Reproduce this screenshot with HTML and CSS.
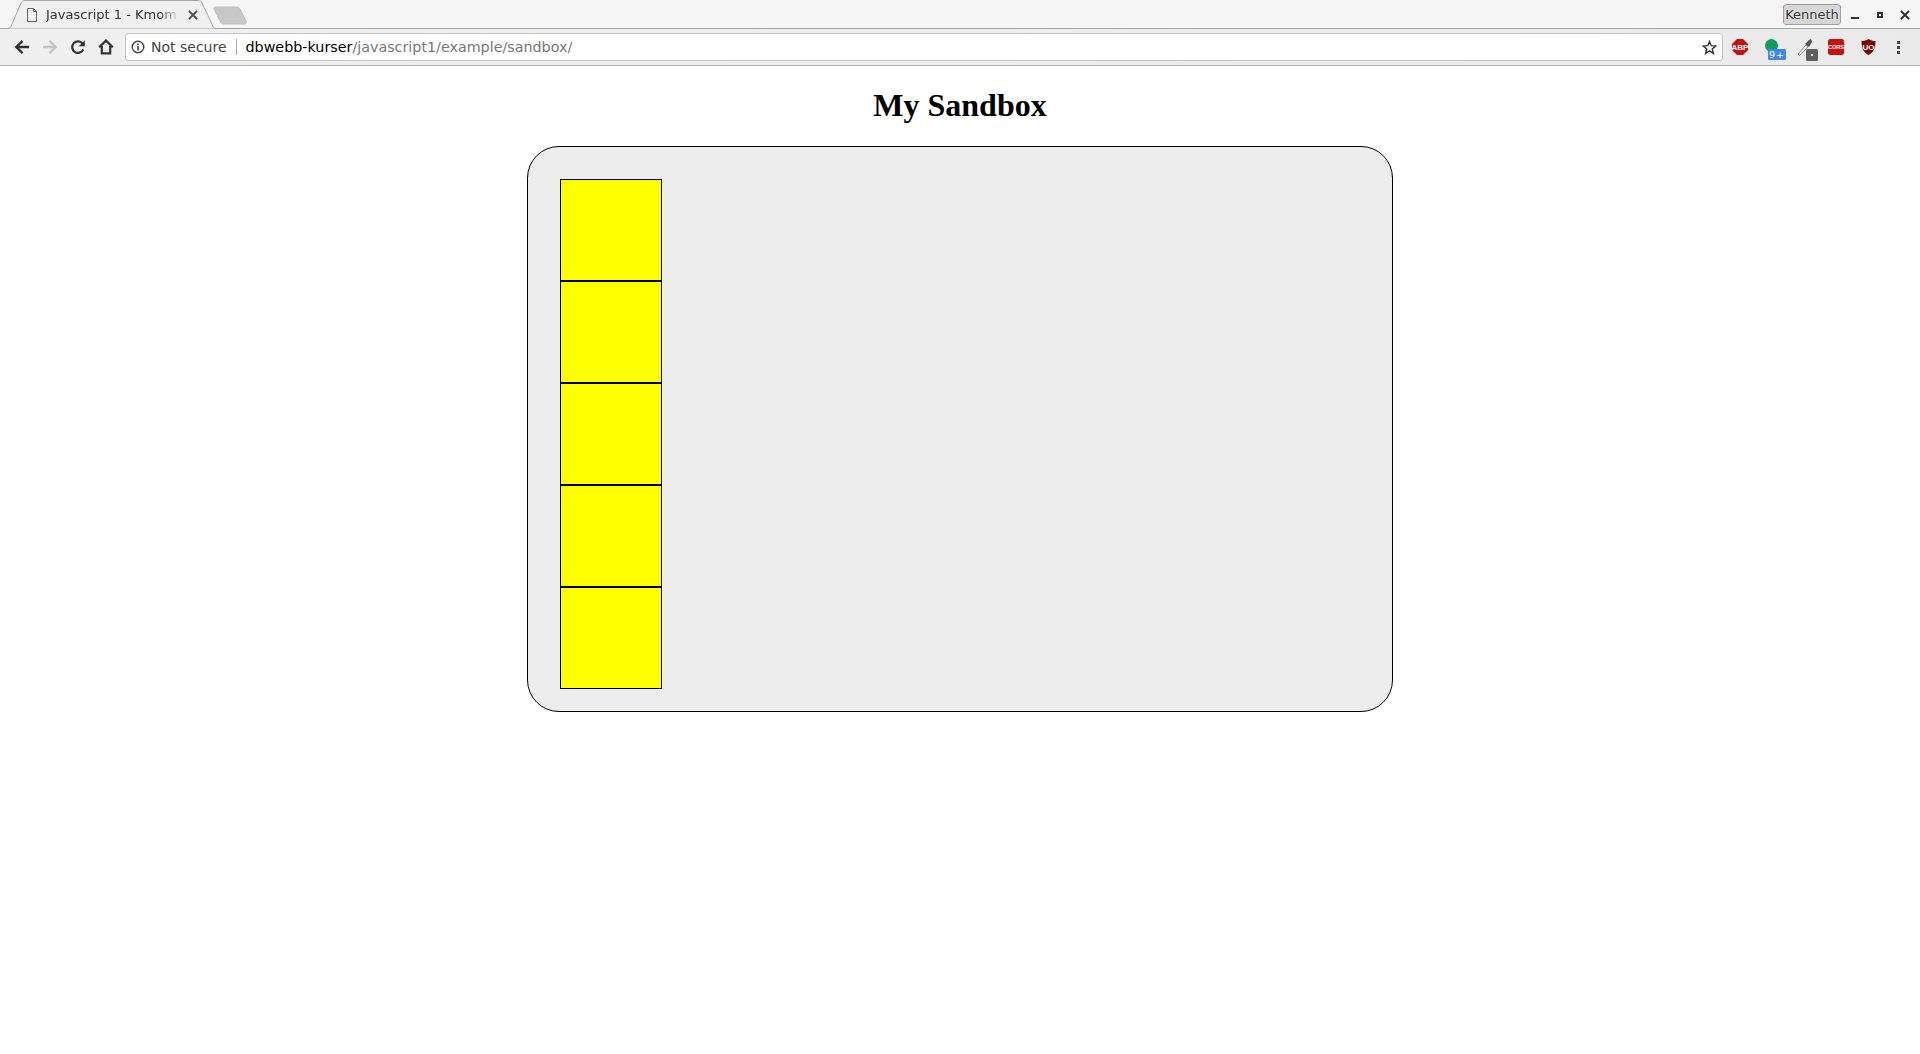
FILE: index.html
```html
<!DOCTYPE html>
<html lang="en">
<head>
    <meta charset="UTF-8">
    <meta name="viewport" content="width=device-width, initial-scale=1.0">
    <title>My Sandbox</title>
    <link rel="stylesheet" href="styles.css">
</head>
<body>
    <header class="browser">
        <div class="tabstrip">
            <div class="tab">
                <svg class="tab-shape" width="226" height="29" viewBox="0 0 226 29">
                    <path d="M0 28.500H8C9.500 28.500 10.500 27.500 11 26.500L21 3C22 1.300 23 .5 25 .5H198C200 .5 201 1.300 202 3L213 26.500C213.500 27.500 214.500 28.500 216 28.500H226" fill="#f0f0f0" stroke="#a6a6a6"/>
                </svg>
                <svg class="tab-doc" width="12" height="14" viewBox="0 0 12 14">
                    <path d="M1.500 .5H7.500L10.500 3.500V13.500H1.500Z M7.500 .5V3.500H10.500" fill="none" stroke="#5f6368"/>
                </svg>
                <span class="tab-title">Javascript 1 - Kmom</span>
                <svg class="tab-close" width="10" height="10" viewBox="0 0 10 10">
                    <path d="M1 1L9 9M9 1L1 9" stroke="#555" stroke-width="2"/>
                </svg>
            </div>
            <svg class="newtab" width="35" height="19" viewBox="0 0 35 19">
                <path d="M3 1H23C25 1 26 1.500 27 3L33 15C34 17 33 18 31 18H11C9 18 8 17 7 15L1 3C0 2 1 1 3 1Z" fill="#c8c8c8" stroke="#bdbdbd"/>
            </svg>
            <div class="window-controls">
                <span class="profile">Kenneth</span>
                <svg width="10" height="10" viewBox="0 0 10 10"><path d="M1 8H9" stroke="#333" stroke-width="2"/></svg>
                <svg width="10" height="10" viewBox="0 0 10 10"><path d="M3 3H7V7H3Z" fill="none" stroke="#333" stroke-width="2"/></svg>
                <svg width="10" height="10" viewBox="0 0 10 10"><path d="M1 1L9 9M9 1L1 9" stroke="#333" stroke-width="2"/></svg>
            </div>
        </div>
        <div class="toolbar">
            <div class="nav-buttons">
                <svg width="16" height="16" viewBox="0 0 16 16"><path d="M15 8H2.500M8.500 1.800L2.300 8L8.500 14.200" fill="none" stroke="#333" stroke-width="2.400"/></svg>
                <svg width="16" height="16" viewBox="0 0 16 16"><path d="M1 8H13.500M7.500 1.800L13.700 8L7.500 14.200" fill="none" stroke="#c4c4c4" stroke-width="2.400"/></svg>
                <svg width="16" height="16" viewBox="0 0 16 16"><path d="M13.300 10.500A5.800 5.800 0 1 1 12.800 4.800" fill="none" stroke="#333" stroke-width="2.200"/><path d="M14.800 1.200V7.200H8.800Z" fill="#333"/></svg>
                <svg width="16" height="16" viewBox="0 0 16 16"><path d="M1.200 8.200L8 1.600L14.800 8.200M3.800 7V14.400H12.200V7" fill="none" stroke="#333" stroke-width="2.200"/></svg>
            </div>
            <div class="omnibox">
                <svg class="info" width="14" height="14" viewBox="0 0 14 14">
                    <circle cx="7" cy="7" r="5.800" fill="none" stroke="#444" stroke-width="1.400"/>
                    <path d="M7 6V10.500M7 3.500V5" stroke="#444" stroke-width="1.600"/>
                </svg>
                <span class="secure">Not secure</span>
                <span class="url"><span class="host">dbwebb-kurser</span>/javascript1/example/sandbox/</span>
                <svg class="star" width="15" height="15" viewBox="0 0 15 15">
                    <path d="M7.500 1.500L9.200 5.700L13.800 6L10.200 8.900L11.400 13.400L7.500 10.900L3.600 13.400L4.800 8.900L1.200 6L5.800 5.700Z" fill="none" stroke="#333" stroke-width="1.400"/>
                </svg>
            </div>
            <div class="extensions">
                <svg class="ext-abp" width="16" height="16" viewBox="0 0 16 16">
                    <path d="M5 0H11L16 5V11L11 16H5L0 11V5Z" fill="#c6100f"/>
                    <text x="8" y="11" class="ext-label" text-anchor="middle">ABP</text>
                </svg>
                <svg class="ext-tall ext-colorzilla" width="22" height="22" viewBox="0 0 22 22">
                    <circle cx="6.500" cy="6.500" r="6.500" fill="#0f9d58"/>
                    <rect x="3" y="10" width="18" height="11" rx="1.500" fill="#4285f4"/>
                    <text x="12" y="19.300" class="ext-badge" text-anchor="middle">9+</text>
                </svg>
                <svg class="ext-tall ext-dropper" width="22" height="22" viewBox="0 0 22 22">
                    <path d="M1 15L9 6L11 8L2.500 16.500Z" fill="#eee" stroke="#8a8a8a"/>
                    <path d="M8 5L11.500 1.500L14 0L15 3L12 8Z" fill="#555"/>
                    <rect x="9" y="10" width="12" height="12" rx="1.500" fill="#5f5f5f"/>
                    <rect x="14" y="15" width="2" height="2" fill="#ddd"/>
                </svg>
                <svg class="ext-cors" width="16" height="16" viewBox="0 0 16 16">
                    <rect width="16" height="16" rx="2.500" fill="#c6100f"/>
                    <text x="8" y="10.200" class="ext-label ext-label-small" text-anchor="middle">CORS</text>
                </svg>
                <svg class="ext-ublock" width="15" height="16" viewBox="0 0 15 16">
                    <path d="M7.500 0C9.500 1.500 12 2 14.500 2C14.500 9 12.500 13.500 7.500 16C2.500 13.500 .5 9 .5 2C3 2 5.500 1.500 7.500 0Z" fill="#800000"/>
                    <text x="7.500" y="11" class="ext-label" text-anchor="middle">UO</text>
                </svg>
                <svg class="ext-menu" width="3" height="13" viewBox="0 0 3 13">
                    <rect width="3" height="3" fill="#444"/>
                    <rect y="5" width="3" height="3" fill="#444"/>
                    <rect y="10" width="3" height="3" fill="#444"/>
                </svg>
            </div>
        </div>
    </header>

    <main class="page">
        <h1>My Sandbox</h1>
        <div class="sandbox">
            <div class="box"></div>
            <div class="box"></div>
            <div class="box"></div>
            <div class="box"></div>
            <div class="box"></div>
        </div>
    </main>
</body>
</html>
```

FILE: styles.css
```css
* {
    box-sizing: border-box;
}

body {
    margin: 0;
    background: #fff;
    font-family: "Liberation Serif", serif;
    color: #000;
}

.browser {
    font-family: "DejaVu Sans", sans-serif;
    height: 66px;
    border-bottom: 1px solid #b4b4b4;
    background: linear-gradient(to right, #f0f0f0, #eaeaea);
}

.tabstrip {
    display: flex;
    align-items: flex-start;
    height: 29px;
    background: #f6f6f6;
    border-bottom: 1px solid #a6a6a6;
}

.tab {
    position: relative;
    width: 226px;
    height: 29px;
    display: flex;
    align-items: center;
    padding-left: 26px;
    font-size: 13px;
    color: #333;
}

.tab-shape {
    position: absolute;
    left: 0;
    top: 0;
}

.tab-doc,
.tab-title,
.tab-close {
    position: relative;
}

.tab-title {
    margin-left: 8px;
    width: 134px;
    white-space: nowrap;
    overflow: hidden;
    -webkit-mask-image: linear-gradient(to right, #000 84%, transparent);
    mask-image: linear-gradient(to right, #000 84%, transparent);
}

.tab-close {
    margin-left: 8px;
}

.newtab {
    margin: 6px 0 0 -13px;
}

.window-controls {
    margin-left: auto;
    display: flex;
    align-items: center;
    gap: 15px;
    height: 28px;
    padding: 1px 10px 0 0;
}

.profile {
    width: 58px;
    height: 21px;
    margin-right: -6px;
    background: #d6d6d6;
    border: 1px solid #a0a0a0;
    border-radius: 3px;
    font-size: 13px;
    line-height: 19px;
    text-align: center;
    color: #333;
    text-shadow: 0 0 2px #fff;
}

.toolbar {
    display: flex;
    align-items: center;
    height: 36px;
    padding-left: 14px;
}

.nav-buttons {
    display: flex;
    gap: 12px;
}

.omnibox {
    display: flex;
    align-items: center;
    flex: 1;
    height: 28px;
    margin-left: 11px;
    padding: 0 5px;
    background: #fff;
    border: 1px solid #c4c4c4;
    border-radius: 3px;
    font-size: 14.300px;
    white-space: nowrap;
}

.secure {
    margin-left: 6px;
    padding-right: 9px;
    border-right: 1px solid #aaa;
    line-height: 16px;
    font-size: 14px;
    color: #444;
}

.url {
    margin-left: 9px;
    color: #777;
}

.host {
    color: #000;
}

.star {
    margin-left: auto;
}

/* extension icons have uneven gaps, as in the real toolbar */
.extensions {
    display: flex;
    align-items: center;
    width: 197px;
    padding-left: 9px;
}

.ext-tall {
    margin-top: 6px;
}

.ext-colorzilla {
    margin-left: 17px;
}

.ext-dropper {
    margin-left: 10px;
}

.ext-cors {
    margin-left: 9px;
}

.ext-ublock {
    margin-left: 17px;
}

.ext-menu {
    margin-left: 21px;
}

.ext-label {
    font-family: "Liberation Sans", sans-serif;
    font-size: 8px;
    font-weight: 700;
    fill: #fff;
}

.ext-label-small {
    font-size: 5.500px;
}

.ext-badge {
    font-family: "DejaVu Sans", sans-serif;
    font-size: 9.500px;
    letter-spacing: 1px;
    fill: #fff;
}

.page {
    padding-top: 21px;
}

h1 {
    margin: 0 0 22px;
    font-size: 32px;
    line-height: 37px;
    text-align: center;
}

.sandbox {
    width: 866px;
    height: 566px;
    margin: 0 auto;
    padding: 32px;
    background: #ededed;
    border: 1px solid #000;
    border-radius: 32px;
}

.box {
    width: 102px;
    height: 102px;
    background: #ff0;
    border: 1px solid #000;
}
```
